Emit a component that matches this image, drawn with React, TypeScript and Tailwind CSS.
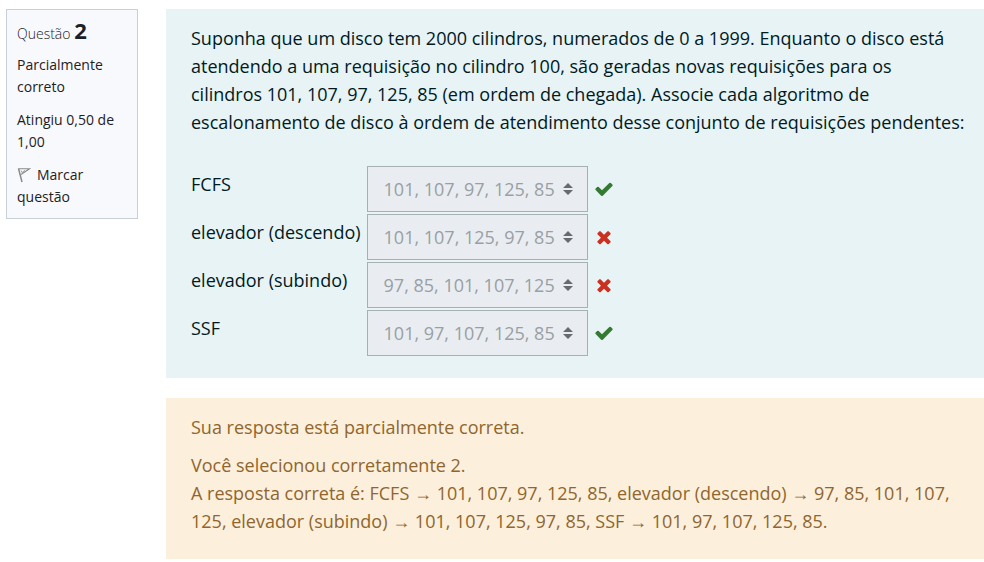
import React from "react";

type Answer = { id: string; label: string; value: string; correct: boolean };

const answers: Answer[] = [
  { id: "fcfs", label: "FCFS", value: "101, 107, 97, 125, 85", correct: true },
  { id: "descendo", label: "elevador (descendo)", value: "101, 107, 125, 97, 85", correct: false },
  { id: "subindo", label: "elevador (subindo)", value: "97, 85, 101, 107, 125", correct: false },
  { id: "ssf", label: "SSF", value: "101, 97, 107, 125, 85", correct: true },
];

function CheckIcon() {
  return (
    <svg viewBox="0 0 1792 1792" className="size-5 fill-[#357a32]" role="img" aria-label="Correto">
      <path d="M1671 566q0 40-28 68l-724 724-136 136q-28 28-68 28t-68-28l-136-136-362-362q-28-28-28-68t28-68l136-136q28-28 68-28t68 28l294 295 656-657q28-28 68-28t68 28l136 136q28 28 28 68z" />
    </svg>
  );
}

function TimesIcon() {
  return (
    <svg viewBox="0 0 1792 1792" className="size-5 fill-[#ca3120]" role="img" aria-label="Incorreto">
      <path d="M1490 1322q0 40-28 68l-136 136q-28 28-68 28t-68-28l-294-294-294 294q-28 28-68 28t-68-28l-136-136q-28-28-28-68t28-68l294-294-294-294q-28-28-28-68t28-68l136-136q28-28 68-28t68 28l294 294 294-294q28-28 68-28t68 28l136 136q28 28 28 68t-28 68l-294 294 294 294q28 28 28 68z" />
    </svg>
  );
}

function FlagIcon() {
  return (
    <svg viewBox="0 0 14 16" className="mr-1.5 inline-block h-4 w-3.5 align-[-3px]" fill="none" stroke="#8a8a8a" aria-hidden="true">
      <path d="M1.5 1.5L5 15" strokeWidth="1.5" />
      <path d="M1.5 1.8H12.5L4 7.5" strokeWidth="1.1" />
      <path d="M4 3.5L5 5.5L8 3.3" strokeWidth="0.8" />
    </svg>
  );
}

function AnswerRow({ answer }: { answer: Answer }) {
  return (
    <tr>
      <th scope="row" className="pt-1 pr-1.5 text-left align-top font-normal">
        <label htmlFor={answer.id}>{answer.label}</label>
      </th>
      <td className="pb-0.5">
        <div className="flex items-center gap-1.5">
          <div className="relative">
            <select
              id={answer.id}
              disabled
              defaultValue={answer.value}
              className="block h-[46px] w-[221px] appearance-none border border-[#a5b0b5] bg-[#e9edf1] pr-8 pl-4 text-[#9a9fa3] opacity-100"
            >
              {answers.map((option) => (
                <option key={option.id}>{option.value}</option>
              ))}
            </select>
            <svg viewBox="0 0 10 14" className="pointer-events-none absolute top-4 right-[15px] h-3.5 w-2.5 fill-[#666b70]" aria-hidden="true">
              <path d="M5 1L10 6H0ZM0 8H10L5 13Z" />
            </svg>
          </div>
          {answer.correct ? <CheckIcon /> : <TimesIcon />}
        </div>
      </td>
    </tr>
  );
}

export default function App() {
  return (
    <main className="flex items-start gap-7 bg-white pt-[9px] pl-1.5 font-['Open_Sans','Noto_Sans',sans-serif]">
      <aside className="flex w-[132px] shrink-0 flex-col gap-[11px] border border-[#c8cfd6] bg-[#f8f9fc] px-2.5 pt-[11px] pb-2.5 text-sm leading-[22px] text-[#1d2125]">
        <h3 className="leading-[18px] font-light">
          Questão <span className="text-[22px] leading-[18px] font-bold">2</span>
        </h3>
        <p>Parcialmente correto</p>
        <p>Atingiu 0,50 de 1,00</p>
        <a href="#marcar">
          <FlagIcon />
          Marcar questão
        </a>
      </aside>

      <div className="flex min-w-0 flex-1 flex-col gap-5 text-lg leading-7">
        <section className="bg-[#e7f3f5] pt-[15px] pr-4 pb-5 pl-[25px] text-[#001a1e]">
          <p>
            Suponha que um disco tem 2000 cilindros, numerados de 0 a 1999. Enquanto o disco está
            atendendo a uma requisição no cilindro 100, são geradas novas requisições para os
            <br />
            cilindros 101, 107, 97, 125, 85 (em ordem de chegada). Associe cada algoritmo de
            escalonamento de disco à ordem de atendimento desse conjunto de requisições pendentes:
          </p>
          <table className="mt-[30px]">
            <tbody>
              {answers.map((answer) => (
                <AnswerRow key={answer.id} answer={answer} />
              ))}
            </tbody>
          </table>
        </section>

        <section className="bg-[#fcefdc] pt-[15px] pr-4 pb-6 pl-[25px] text-[#8f662e]">
          <p className="mb-[10px]">Sua resposta está parcialmente correta.</p>
          <p>Você selecionou corretamente 2.</p>
          <p>
            A resposta correta é: FCFS → 101, 107, 97, 125, 85, elevador (descendo) → 97, 85, 101, 107,
            125, elevador (subindo) → 101, 107, 125, 97, 85, SSF → 101, 97, 107, 125, 85.
          </p>
        </section>
      </div>
    </main>
  );
}
